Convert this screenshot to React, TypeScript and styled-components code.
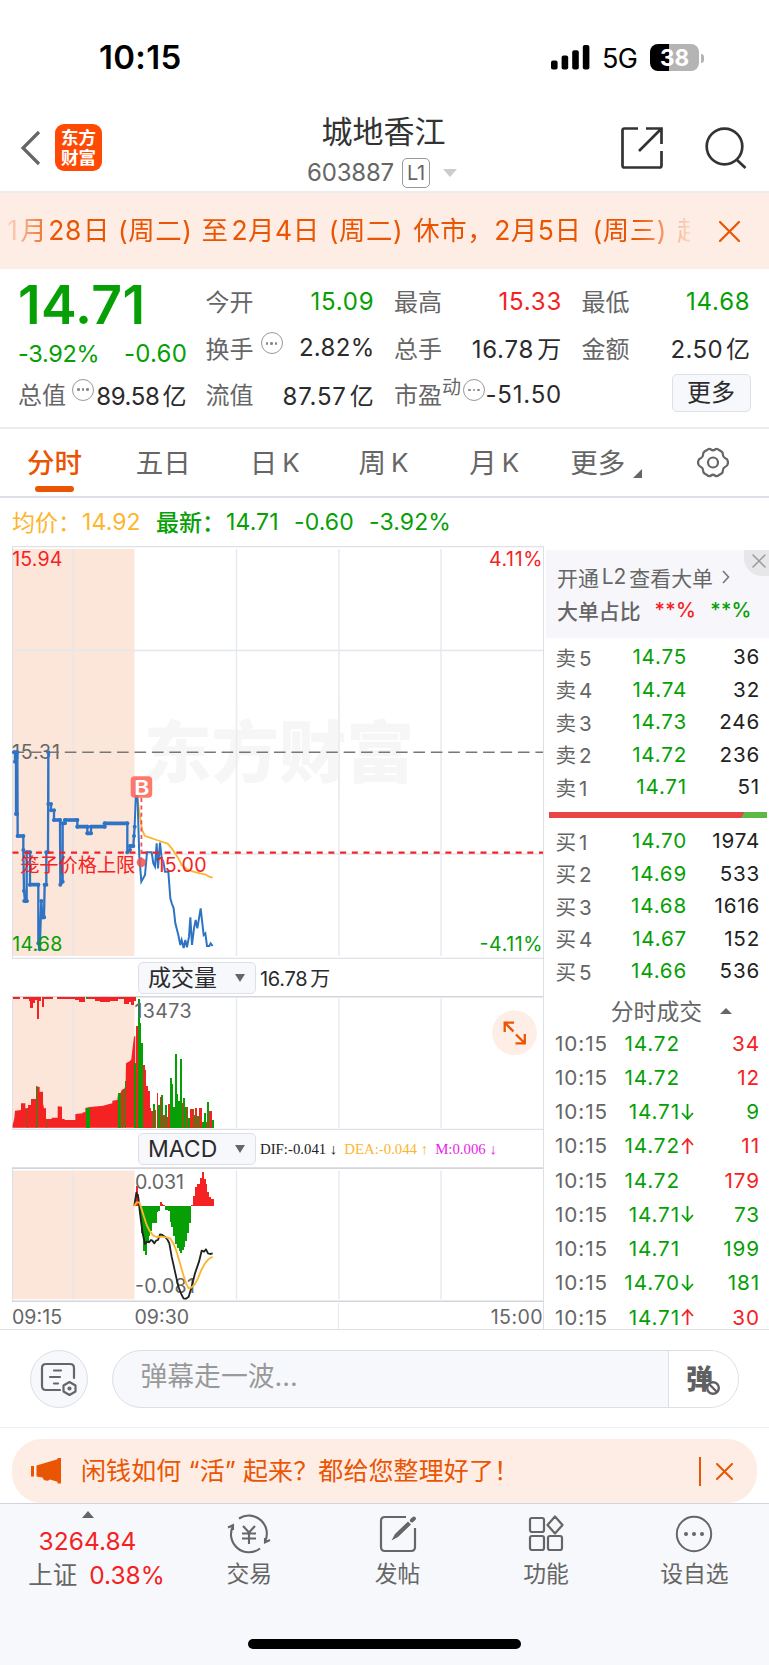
import React from 'react';
import styled, { createGlobalStyle } from 'styled-components';

const RED = '#f52224';
const GREEN = '#06a006';
const ORANGE = '#ea5504';
const GREY = '#666';
const INK = '#2b2b2d';

const Global = createGlobalStyle`
  * { box-sizing: border-box; }
  body { margin: 0; background: #fff; }
  svg { display: block; flex: none; }
`;

const Screen = styled.div`
  width: 769px;
  height: 1665px;
  overflow: hidden;
  display: flex;
  flex-direction: column;
  background: #fff;
  color: ${INK};
  font-family: Inter, 'Noto Sans CJK SC', sans-serif;
  white-space: nowrap;
`;

/* ---------- status bar ---------- */
const StatusBar = styled.div`
  height: 105px;
  padding: 10px 65px 0 99px;
  display: flex;
  align-items: center;
  color: #000;
`;
const Clock = styled.div`
  flex: 1;
  margin-top: -1px;
  font-size: 33px;
  font-weight: 600;
  letter-spacing: 0.3px;
`;
const Network = styled.div`
  margin: 2px 12px 0 12px;
  width: 36px;
  font-size: 27px;
  letter-spacing: -0.6px;
`;
const Battery = styled.div`
  width: 49px;
  height: 27px;
  margin-top: 0;
  border-radius: 8px;
  background: linear-gradient(90deg, #000 39%, #b4b4b4 39%);
  color: #fff;
  font-size: 22.5px;
  font-weight: 700;
  line-height: 27px;
  text-align: center;
`;
const BatteryTip = styled.div`
  width: 3px;
  height: 9px;
  margin: 1px 0 0 2px;
  border-radius: 0 3px 3px 0;
  background: #b4b4b4;
`;

/* ---------- header ---------- */
const Header = styled.header`
  height: 88px;
  padding: 0 22px 0 20px;
  display: flex;
  border-bottom: 2px solid #ececee;
`;
const HeaderSide = styled.div<{ $right?: boolean }>`
  width: 204px;
  display: flex;
  justify-content: ${p => (p.$right ? 'flex-end' : 'flex-start')};
  align-items: center;
  padding-bottom: 1px;
`;
const AppLogo = styled.div`
  width: 47px;
  height: 47px;
  margin-left: 14px;
  padding-top: 4px;
  border-radius: 9px;
  background: #ff4a06;
  color: #fff;
  font-size: 17.5px;
  font-weight: 700;
  line-height: 19.5px;
  text-align: center;
`;
const HeaderCenter = styled.div`
  flex: 1;
  display: flex;
  flex-direction: column;
  align-items: center;
`;
const StockName = styled.div`
  margin: 7px 0 0 0;
  height: 40px;
  line-height: 40px;
  font-size: 31px;
  color: #333;
`;
const StockCode = styled.div`
  display: flex;
  align-items: center;
  height: 31px;
  margin-top: 5px;
  margin-left: -3px;
  font-size: 24px;
  letter-spacing: -0.2px;
  color: ${GREY};
`;
const LevelTag = styled.span`
  width: 28px;
  height: 30px;
  margin: 0 13px 0 8px;
  border: 1.5px solid #999;
  border-radius: 5px;
  font-size: 20px;
  line-height: 28px;
  text-align: center;
`;

/* ---------- notice ---------- */
const Notice = styled.div`
  height: 76px;
  padding-right: 29px;
  display: flex;
  align-items: center;
  justify-content: space-between;
  background: #feede4;
`;
const NoticeText = styled.div`
  width: 690px;
  overflow: hidden;
  margin-top: -2px;
  padding-left: 7px;
  font-size: 26.4px;
  line-height: 40px;
  letter-spacing: 0.6px;
  color: ${ORANGE};
  mask-image: linear-gradient(90deg, transparent 0, #000 55px, #000 635px, transparent 698px);
`;
const NoticePart = styled.span<{ $gap?: number }>`
  margin-left: ${p => p.$gap ?? 0}px;
`;

/* ---------- quote ---------- */
const Quote = styled.section`
  height: 160px;
  padding: 9px 18.5px 0 18px;
  display: flex;
  justify-content: space-between;
  border-bottom: 2px solid #ebecef;
`;
const QuoteColumn = styled.div<{ $w: number }>`
  width: ${p => p.$w}px;
  display: flex;
  flex-direction: column;
`;
const LastPrice = styled.div`
  height: 53px;
  line-height: 53px;
  font-size: 53.5px;
  font-weight: 600;
  letter-spacing: 0.3px;
  color: ${GREEN};
`;
const Changes = styled.div`
  height: 40px;
  padding-top: 5px;
  display: flex;
  justify-content: space-between;
  align-items: center;
  font-size: 23.5px;
  letter-spacing: -0.3px;
  color: ${GREEN};
`;
const ChangeAmount = styled.span`
  margin-right: -1px;
  font-size: 24px;
  letter-spacing: 0.2px;
`;
const QuoteCell = styled.div`
  height: 46.6px;
  display: flex;
  align-items: center;
  font-size: 24px;
`;
const CellLabel = styled.span`
  margin-top: -1px;
  color: ${GREY};
`;
const CellSup = styled.sup`
  font-size: 19px;
  line-height: 20px;
  margin-bottom: 12px;
  color: ${GREY};
`;
const CellValue = styled.span<{ $c?: string; $track?: number }>`
  margin-left: auto;
  letter-spacing: ${p => p.$track ?? 0.8}px;
  color: ${p => p.$c ?? INK};
`;
const Unit = styled.span`
  margin-left: 3px;
`;
const InfoDots = styled.span<{ $ml?: number }>`
  width: 22px;
  height: 22px;
  margin: 0 0 9px ${p => p.$ml ?? 6}px;
  border: 1.5px solid #999;
  border-radius: 50%;
  display: flex;
  flex: none;
  align-items: center;
  justify-content: center;
  gap: 2px;
  i { width: 2.6px; height: 2.6px; border-radius: 50%; background: #888; }
`;
const MoreButton = styled.button`
  width: 79px;
  height: 38px;
  margin: -2px 0 0 auto;
  padding: 0;
  border: 1.5px solid #dde0e6;
  border-radius: 5px;
  background: #f7f8fb;
  color: ${INK};
  font: inherit;
  font-size: 24px;
  line-height: 34px;
`;

/* ---------- tabs ---------- */
const Tabs = styled.nav`
  height: 69px;
  display: flex;
  padding: 0 40px 0 27px;
  border-bottom: 2px solid #dde0e8;
`;
const Tab = styled.div<{ $active?: boolean; $w: number }>`
  width: ${p => p.$w}px;
  height: 67px;
  display: flex;
  font-size: 27.5px;
  line-height: 68px;
  color: ${p => (p.$active ? ORANGE : GREY)};
  font-weight: ${p => (p.$active ? 500 : 400)};
  position: relative;
  ${p => p.$active && `&::after {
    content: ''; position: absolute; left: 8px; bottom: 4px; width: 39px; height: 6px;
    border-radius: 3px; background: ${ORANGE};
  }`}
`;
const PeriodLetter = styled.span`
  margin-left: 5px;
  font-size: 26px;
`;
const TabCorner = styled.i`
  margin: 40px 0 0 8px;
  width: 0;
  height: 0;
  border-left: 9px solid transparent;
  border-bottom: 9px solid ${GREY};
`;
const GearSlot = styled.div`
  padding-top: 18px;
`;

/* ---------- averages ---------- */
const Averages = styled.div`
  height: 48px;
  padding: 0 0 1px 12px;
  display: flex;
  align-items: center;
  font-size: 23px;
  color: ${GREEN};
`;
const AverageLabel = styled.span<{ $c?: string }>`
  width: 70px;
  margin-top: -2px;
  color: ${p => p.$c};
`;
const AverageValue = styled.span<{ $c?: string; $w: number }>`
  width: ${p => p.$w}px;
  letter-spacing: 0.1px;
  color: ${p => p.$c};
`;

/* ---------- market body ---------- */
const Market = styled.main`
  height: 784px;
  display: flex;
  overflow: hidden;
  border-bottom: 1.5px solid #dfe1e8;
`;
const Charts = styled.div`
  width: 544px;
  border-right: 1.5px solid #dcdfe6;
`;
const IndicatorRow = styled.div<{ $h: number }>`
  height: ${p => p.$h}px;
  padding-left: 138px;
  display: flex;
  align-items: center;
`;
const IndicatorSelect = styled.div`
  width: 118px;
  height: 32px;
  margin-right: 4px;
  padding: 0 10px 0 9px;
  display: flex;
  align-items: center;
  justify-content: space-between;
  border: 1.5px solid #dde0e6;
  border-radius: 5px;
  background: #f7f8fb;
  font-size: 23px;
  line-height: 28px;
`;
const DownMark = styled.i`
  border: 5px solid transparent;
  border-top: 8px solid ${GREY};
  border-bottom: 0;
`;
const VolumeTotal = styled.span`
  font-size: 20px;
  letter-spacing: -0.3px;
`;
const MacdValue = styled.span<{ $c: string }>`
  margin-right: 7px;
  font: 14.8px/20px 'Liberation Serif', 'DejaVu Sans', serif;
  color: ${p => p.$c};
`;
const TimeAxis = styled.div`
  height: 27px;
  display: flex;
  padding: 1px 0 0 12px;
  font-size: 19.6px;
  line-height: 28px;
  color: ${GREY};
`;
const TimeMark = styled.span<{ $w?: number }>`
  width: ${p => (p.$w ? p.$w + 'px' : 'auto')};
`;
const TimeEnd = styled.span`
  flex: 1;
  margin-left: 80px;
  border-left: 1px solid #e6e8ee;
  text-align: right;
  letter-spacing: 0.4px;
`;

/* ---------- order book ---------- */
const Book = styled.aside`
  flex: 1;
  display: flex;
  flex-direction: column;
  padding-top: 4px;
`;
const BigOrders = styled.div`
  position: relative;
  flex: none;
  height: 88px;
  margin-left: 1.5px;
  padding: 10px 0 0 11.5px;
  background: #f7f7fb;
  color: ${GREY};
  font-size: 20.9px;
`;
const BigOrdersLink = styled.div`
  display: flex;
  align-items: center;
  height: 33px;
`;
const BigOrdersRatio = styled.div`
  display: flex;
  align-items: center;
  height: 33px;
  font-weight: 500;
`;
const Ratio = styled.span<{ $c: string }>`
  margin-left: 14px;
  font-size: 20px;
  letter-spacing: 0.3px;
  color: ${p => p.$c};
`;
const CloseCorner = styled.div`
  position: absolute;
  right: 0;
  top: 0;
  width: 25px;
  height: 26px;
  padding: 4px 0 0 8px;
  border-bottom-left-radius: 18px;
  background: #e7e7ea;
`;
const Levels = styled.div<{ $top: number }>`
  padding: ${p => p.$top}px 9px 0 11.5px;
`;
const LevelRow = styled.div`
  height: 32.5px;
  display: flex;
  align-items: center;
  font-size: 20.6px;
  letter-spacing: 0.8px;
`;
const LevelName = styled.span`
  width: 48px;
  letter-spacing: 0;
  color: ${GREY};
`;
const LevelDigit = styled.span`
  margin-left: 3px;
`;
const LevelPrice = styled.span`
  width: 83.5px;
  text-align: right;
  color: ${GREEN};
`;
const LevelQty = styled.span`
  flex: 1;
  text-align: right;
  color: #222;
`;
const Pressure = styled.div`
  flex: none;
  height: 6px;
  margin: 8.5px 2px 0 4.5px;
  background: linear-gradient(118deg, #e84545 88.2%, #5cb946 88.5%);
`;
const TradesTitle = styled.div`
  flex: none;
  height: 39px;
  padding: 8px 37px 0 0;
  display: flex;
  align-items: center;
  justify-content: flex-end;
  gap: 18px;
  font-size: 22.8px;
  color: ${GREY};
`;
const UpMark = styled.i<{ $h: number }>`
  border: 6px solid transparent;
  border-bottom: ${p => p.$h}px solid ${GREY};
  border-top: 0;
`;
const TradeRow = styled.div`
  flex: none;
  height: 34.28px;
  padding: 0 9px 0 11px;
  display: flex;
  align-items: center;
  font-size: 20.7px;
  letter-spacing: 0.9px;
`;
const TradeTime = styled.span`
  width: 56px;
  color: ${GREY};
`;
const TradePrice = styled.span`
  width: 69px;
  text-align: right;
  color: ${GREEN};
`;
const TradeArrow = styled.span`
  width: 17px;
`;
const TradeQty = styled.span<{ $c: string }>`
  flex: 1;
  text-align: right;
  color: ${p => p.$c};
`;

/* ---------- comment bar ---------- */
const CommentBar = styled.div`
  height: 98px;
  padding: 0 30px;
  display: flex;
  align-items: center;
  gap: 23.5px;
  border-bottom: 1.5px solid #f0f1f4;
`;
const RoundButton = styled.div`
  width: 58px;
  height: 58px;
  display: flex;
  align-items: center;
  justify-content: center;
  border: 1.5px solid #dcdfe6;
  border-radius: 50%;
  background: #f7f8fb;
`;
const CommentPill = styled.div`
  flex: 1;
  height: 58px;
  display: flex;
  overflow: hidden;
  border: 1.5px solid #dcdfe6;
  border-radius: 29px;
  background: #f7f8fb;
`;
const CommentHint = styled.div`
  flex: 1;
  padding-left: 28px;
  font-size: 26.8px;
  line-height: 50px;
  color: #999;
`;
const DanmuToggle = styled.div`
  width: 70px;
  display: flex;
  align-items: center;
  padding: 0 0 3px 17px;
  border-left: 1.5px solid #dcdfe6;
  background: #fff;
  color: #606060;
  font-size: 27px;
  font-weight: 800;
`;

/* ---------- promo ---------- */
const PromoWrap = styled.div`
  height: 75px;
  padding: 11px 12px 0;
`;
const Promo = styled.div`
  height: 64px;
  padding: 0 24.5px 0 19px;
  display: flex;
  align-items: center;
  border-radius: 30px;
  background: #feede4;
  color: ${ORANGE};
  font-size: 25px;
`;
const PromoText = styled.div`
  flex: 1;
  margin: 0 0 0 20px;
  line-height: 40px;
  letter-spacing: 0.1px;
`;
const PromoDivider = styled.i`
  width: 1.8px;
  height: 29px;
  margin-right: 15px;
  background: ${ORANGE};
`;

/* ---------- bottom nav ---------- */
const BottomBar = styled.footer`
  flex: 1;
  display: flex;
  flex-direction: column;
  border-top: 1.5px solid #cfd5de;
  background: #f7f8fb;
`;
const NavRow = styled.div`
  height: 135px;
  display: flex;
`;
const IndexBox = styled.div`
  width: 175px;
  padding-top: 7px;
  display: flex;
  flex-direction: column;
  align-items: center;
  color: ${RED};
  font-size: 24.5px;
  letter-spacing: 0;
`;
const IndexValue = styled.div`
  margin: 5px 0 0 0;
  height: 36px;
  line-height: 36px;
`;
const IndexLine = styled.div`
  height: 34px;
  line-height: 34px;
  margin: -1px 0 0 18px;
`;
const IndexName = styled.span`
  color: ${GREY};
  margin-right: 12px;
`;
const NavItem = styled.div`
  width: 148.4px;
  padding-top: 10px;
  display: flex;
  flex-direction: column;
  align-items: center;
  font-size: 22.8px;
  line-height: 36px;
  color: ${GREY};
  svg { margin-bottom: 1.5px; overflow: visible; }
`;
const HomeIndicator = styled.div`
  width: 273px;
  height: 10px;
  margin: 0 auto;
  border-radius: 5px;
  background: #000;
`;

/* ---------- icons ---------- */
const Cross = ({ s, c, w = 2 }: { s: number; c: string; w?: number }) => (
  <svg width={s} height={s} viewBox={`0 0 ${s} ${s}`} stroke={c} strokeWidth={w} strokeLinecap="round">
    <path d={`M1 1L${s - 1} ${s - 1}M${s - 1} 1L1 ${s - 1}`} />
  </svg>
);
const Dots = ({ ml }: { ml?: number }) => (
  <InfoDots $ml={ml}><i /><i /><i /></InfoDots>
);

/* ---------- chart data, in thirds of a pixel ---------- */
const AUCTION = '42,637 45,637 45,665 48,665 48,822 51,822 51,637 52,637 53,888 70,888 70,930 72,1053 75,1083 80,1083 80,937 90,937 90,1034 115,1034 115,1210 119,1228 124,1083 127,1132 132,1132 134,1034 139,1034 139,937 144,937 145,637 145,792 153,792 153,811 162,811 162,840 180,840 181,1034 188,1025 188,850 195,850 195,840 232,840 232,860 262,860 262,880 273,880 273,860 314,860 314,850 382,850 382,937 390,930 390,918 400,918 402,888 404,860';
const FLATS = 'M53 888H70M90 1034H115M162 840H180M195 840H232M232 860H262M262 880H273M273 860H314M314 850H382M390 918H400M72 1083H81M80 937H90M125 1132H133';
const SESSION = '404,860 409,718 413,790 418,950 424,1025 435,1005 441,937 455,937 460,970 465,980 470,910 474,985 480,908 485,955 490,965 495,995 505,995 511,1075 516,1092 521,1105 526,1150 535,1185 541,1215 545,1200 551,1224 556,1200 561,1222 567,1190 571,1132 576,1215 582,1165 587,1140 592,1165 602,1105 611,1185 616,1180 621,1218 628,1218 632,1210 638,1218';
const AVERAGE = '412,770 416,800 420,830 426,870 435,888 450,893 470,900 503,911 515,925 525,940 535,955 545,975 560,987 580,995 600,1000 618,1004 628,1010 638,1013';
const AUCTION_VOLUME = '38,533 38,525 43,505 45,482 63,480 63,460 76,460 76,475 84,475 84,465 93,465 93,447 108,447 108,409 119,411 119,425 129,425 129,460 132,475 138,475 138,507 155,507 155,503 173,503 173,469 186,470 186,507 194,507 194,510 226,510 226,492 248,490 248,487 256,487 256,474 270,471 310,467 325,463 337,460 337,452 352,450 354,432 362,428 365,420 374,415 377,395 378,340 390,333 394,328 397,300 402,260 406,258 406,533';
type Bar = [string, number, number, number];
const VOLUME: Bar[] = [
  ['g', 108, 111, 409], ['d', 82, 84, 475], ['d', 93, 94, 465], ['d', 138, 140, 507], ['g', 257, 270, 473], ['g', 354, 363, 430], ['d', 366, 368, 420], ['g', 376, 378, 392],
  ['g', 403, 408, 340], ['r', 408, 413, 228], ['g', 413, 419, 147], ['g', 419, 424, 218], ['g', 424, 429, 280], ['r', 429, 434, 345],
  ['r', 434, 438, 360], ['r', 438, 443, 408], ['r', 443, 449, 423], ['r', 449, 454, 473], ['r', 454, 459, 482], ['g', 459, 464, 462],
  ['r', 464, 469, 480], ['r', 470, 474, 430], ['g', 474, 479, 465], ['r', 479, 484, 442], ['g', 484, 489, 435], ['r', 489, 494, 495],
  ['g', 495, 500, 465], ['r', 500, 505, 500], ['r', 505, 509, 462], ['g', 510, 515, 384], ['g', 515, 520, 402], ['g', 520, 525, 470],
  ['g', 525, 530, 311], ['g', 530, 535, 432], ['g', 535, 541, 452], ['g', 541, 546, 326], ['r', 546, 550, 458], ['g', 550, 556, 445],
  ['g', 556, 560, 470], ['r', 560, 565, 470], ['g', 565, 570, 505], ['r', 570, 582, 478], ['d', 576, 578, 478], ['g', 582, 586, 495],
  ['r', 586, 591, 473], ['g', 591, 597, 498], ['r', 597, 606, 474], ['g', 607, 612, 515], ['g', 612, 617, 490], ['r', 617, 621, 515],
  ['g', 622, 627, 455], ['r', 628, 637, 483], ['g', 637, 643, 510],
];
const UNMATCHED: Bar[] = [
  ['r', 38, 60, 146], ['r', 70, 86, 147], ['r', 86, 90, 152], ['r', 90, 98, 173], ['r', 98, 104, 158], ['r', 104, 110, 150], ['r', 110, 117, 206], ['r', 117, 124, 152],
  ['r', 125, 131, 170], ['r', 131, 160, 146], ['r', 172, 225, 147], ['r', 225, 238, 150], ['r', 238, 256, 156], ['g', 257, 264, 146],
  ['r', 264, 285, 147], ['r', 285, 300, 153], ['r', 300, 330, 157], ['r', 330, 355, 152], ['r', 355, 372, 146], ['r', 372, 388, 162], ['r', 388, 394, 157], ['r', 394, 403, 165], ['r', 403, 407, 154],
];
const MACD: Bar[] = [
  ['r', 405, 409, 735], ['r', 409, 413, 708], ['r', 413, 418, 732], ['g', 418, 424, 790], ['g', 424, 429, 850], ['g', 429, 434, 902], ['g', 434, 440, 916], ['g', 440, 446, 880],
  ['g', 446, 451, 858], ['g', 451, 456, 842], ['g', 456, 470, 818], ['g', 470, 475, 787], ['g', 475, 480, 782], ['r', 480, 485, 756],
  ['r', 485, 490, 763], ['r', 490, 496, 766], ['g', 495, 503, 781], ['g', 503, 510, 784], ['g', 510, 514, 815], ['g', 514, 520, 832],
  ['g', 520, 525, 858], ['g', 525, 530, 882], ['g', 530, 536, 895], ['g', 536, 541, 903], ['g', 541, 546, 909], ['g', 546, 551, 900],
  ['g', 551, 556, 890], ['g', 556, 561, 873], ['g', 561, 566, 848], ['g', 566, 572, 820], ['r', 572, 580, 764], ['r', 580, 586, 738],
  ['r', 586, 592, 710], ['r', 592, 599, 702], ['r', 599, 605, 683], ['r', 605, 612, 667], ['r', 612, 617, 686], ['r', 617, 622, 702],
  ['r', 622, 627, 727], ['r', 627, 633, 740], ['r', 633, 643, 748],
];
const DIF = '403,768 409,728 415,742 420,790 428,850 435,882 441,875 447,877 453,870 457,872 463,880 468,872 474,870 480,853 487,855 495,860 503,870 508,880 515,920 525,965 535,1010 545,1035 551,1046 558,1046 566,1040 575,1010 585,970 597,935 605,902 612,905 618,898 624,910 630,912 638,910';
const DEA = '403,768 410,757 418,757 424,775 432,800 440,825 450,845 460,857 470,861 485,860 500,862 510,865 520,880 530,905 540,940 550,975 558,1000 566,1015 574,1013 584,1003 594,985 604,960 615,940 625,928 638,920';
const TONE: Record<string, string> = { r: '#f52224', g: '#06a006', d: '#8a5a12' };
const Bars = ({ data, base }: { data: Bar[]; base: number }) => (
  <g shapeRendering="crispEdges">
    {data.map(([t, a, b, y], i) => (
      <rect key={i} x={a} width={b - a} y={Math.min(y, base)} height={Math.abs(base - y)} fill={TONE[t]} />
    ))}
  </g>
);
const Grid = ({ top, bottom }: { top: number; bottom: number }) => (
  <g>
    <rect x={12.5} y={top} width={122} height={bottom - top} fill="#fce6da" />
    <path d={[73, 236.5, 339, 441].map(x => `M${x} ${top}V${bottom}`).join('')} stroke="#e4e7ee" strokeWidth={1.3} />
    <path d={`M12.5 ${top - 3}V${bottom + 2}`} stroke="#dcdfe6" />
  </g>
);
const chartFont = 'Inter, "Noto Sans CJK SC", sans-serif';

const PriceChart = () => (
  <svg width="543" height="413" viewBox="0 546 543 413" fontFamily={chartFont} fontSize="19.6">
    <Grid top={549} bottom={956} />
    <path d="M12 546.5H543M12 958.3H543" stroke="#dfe1e7" strokeWidth={1.3} />
    <path d="M12 650.5H543M12 854H543" stroke="#e4e7ee" strokeWidth={1.4} />
    <text x="144" y="777" fontSize="67.5" fontWeight="900" fill="#f6f6f7">东方财富</text>
    <path d="M236.5 700V800M339 700V800" stroke="#e9ebf1" strokeWidth={1.3} />
    <text x="12" y="758.5" fill={GREY} textLength="48">15.31</text>
    <path d="M12.5 752.3H543" stroke="#777" strokeWidth={1.4} strokeDasharray="11.6 5.83" />
    <g transform="translate(0 540) scale(.33333)" fill="none" strokeLinejoin="round">
      <polyline points={AVERAGE} stroke="#fdb52e" strokeWidth={5.5} />
      <polyline points={AUCTION} stroke="#2f74c4" strokeWidth={7} />
      <path d={FLATS} stroke="#2f74c4" strokeWidth={11} strokeLinecap="round" />
      <polyline points={SESSION} stroke="#2f74c4" strokeWidth={6} strokeLinejoin="miter" />
      {AUCTION.split(' ').map((p, i) => {
        const [x, y] = p.split(',');
        return <circle key={i} cx={x} cy={y} r={6} fill="#2f74c4" />;
      })}
    </g>
    <path d="M12.5 852.6H543" stroke="#f52224" strokeWidth={2.4} strokeDasharray="6 5.7" />
    <path d="M141.4 798V860" stroke="#f2524e" strokeWidth={1.8} strokeDasharray="4 3.4" />
    <circle cx="141.3" cy="862.6" r="4.6" fill="#f2524e" opacity=".85" />
    <rect x="130.7" y="776.3" width="21.5" height="21.4" rx="4" fill="#ff6558" opacity=".88" />
    <text x="134" y="794.6" fontSize="20.5" fontWeight="600" fill="#fff" textLength="15.5" lengthAdjust="spacingAndGlyphs">B</text>
    <g fill={RED}>
      <text x="12.3" y="565.7" textLength="50">15.94</text>
      <text x="489" y="565.7" textLength="53.5">4.11%</text>
      <text x="20.2" y="872" fontSize="19.2">笼子价格上限</text>
      <text x="156.5" y="871.5" textLength="50">15.00</text>
    </g>
    <g fill={GREEN}>
      <text x="12.3" y="951" textLength="50">14.68</text>
      <text x="479.5" y="951" textLength="63">-4.11%</text>
    </g>
  </svg>
);

const VolumeChart = () => (
  <svg width="543" height="134" viewBox="0 996 543 134" fontFamily={chartFont} fontSize="19.6">
    <Grid top={998.5} bottom={1128} />
    <path d="M12 996.8H543" stroke="#d2d5dc" strokeWidth={1.6} />
    <path d="M12 1129.3H543" stroke="#dfe1e7" strokeWidth={1.3} />
    <g transform="translate(0 950) scale(.33333)">
      <polygon points={AUCTION_VOLUME} fill="#f52224" />
      <Bars data={VOLUME} base={533} />
      <Bars data={UNMATCHED} base={142} />
    </g>
    <text x="134.5" y="1018" fill={GREY} textLength="57">13473</text>
    <circle cx="514.5" cy="1032.7" r="22.4" fill="#feeee6" />
    <g stroke={ORANGE} strokeWidth="2.3" fill="none">
      <path d="M514 1022.7H504.7V1032M505 1023L513.5 1031.5M515.5 1043.3H524.8V1034M524.5 1043L516 1034.5" />
    </g>
  </svg>
);

const MacdChart = () => (
  <svg width="543" height="135" viewBox="0 1167 543 135" fontFamily={chartFont} fontSize="19.6">
    <Grid top={1170.5} bottom={1299.3} />
    <path d="M12 1168.2H543M12 1301.4H543" stroke="#d2d5dc" strokeWidth={1.7} />
    <g transform="translate(0 950) scale(.33333)" fill="none" strokeLinejoin="round">
      <Bars data={MACD} base={769} />
    </g>
    <g fill={GREY}>
      <text x="135" y="1189" textLength="49">0.031</text>
      <text x="135" y="1293" textLength="60">-0.081</text>
    </g>
    <g transform="translate(0 950) scale(.33333)" fill="none" strokeLinejoin="round">
      <polyline points={DIF} stroke="#222" strokeWidth={5.5} />
      <polyline points={DEA} stroke="#fdb52e" strokeWidth={5.5} />
    </g>
  </svg>
);

const SELL = [['5', '14.75', '36'], ['4', '14.74', '32'], ['3', '14.73', '246'], ['2', '14.72', '236'], ['1', '14.71', '51']];
const BUY = [['1', '14.70', '1974'], ['2', '14.69', '533'], ['3', '14.68', '1616'], ['4', '14.67', '152'], ['5', '14.66', '536']];
const TRADES: [string, string, string, string][] = [
  ['14.72', '', '34', RED], ['14.72', '', '12', RED], ['14.71', '↓', '9', GREEN], ['14.72', '↑', '11', RED], ['14.72', '', '179', RED],
  ['14.71', '↓', '73', GREEN], ['14.71', '', '199', GREEN], ['14.70', '↓', '181', GREEN], ['14.71', '↑', '30', RED],
];

const LevelList = ({ side, rows, top }: { side: string; rows: string[][]; top: number }) => (
  <Levels $top={top}>
    {rows.map(([n, price, qty]) => (
      <LevelRow key={n}>
        <LevelName>{side}<LevelDigit>{n}</LevelDigit></LevelName>
        <LevelPrice>{price}</LevelPrice>
        <LevelQty>{qty}</LevelQty>
      </LevelRow>
    ))}
  </Levels>
);

const TickArrow = ({ up }: { up: boolean }) => (
  <svg width="15" height="18" viewBox="0 0 15 18" fill="none" stroke={up ? RED : GREEN} strokeWidth="1.8">
    <path d={up ? 'M7.5 17V2M2 8L7.5 2L13 8' : 'M7.5 1V16M2 10L7.5 16L13 10'} />
  </svg>
);

export default function App() {
  return (
    <Screen>
      <Global />
      <StatusBar>
        <Clock>10:15</Clock>
        <svg width="39" height="25" viewBox="0 0 39 25">
          <rect x="0" y="15.5" width="6.6" height="9" rx="2" />
          <rect x="10.6" y="10.5" width="6.6" height="14" rx="2" />
          <rect x="21.2" y="5.3" width="6.6" height="19.2" rx="2" />
          <rect x="31.8" y="0" width="6.6" height="24.5" rx="2" />
        </svg>
        <Network>5G</Network>
        <Battery>38</Battery>
        <BatteryTip />
      </StatusBar>

      <Header>
        <HeaderSide>
          <svg width="21" height="36" viewBox="0 0 21 36" fill="none" stroke="#666" strokeWidth="3.2">
            <path d="M19 2L3 18L19 34" />
          </svg>
          <AppLogo>东方<br />财富</AppLogo>
        </HeaderSide>
        <HeaderCenter>
          <StockName>城地香江</StockName>
          <StockCode>
            603887
            <LevelTag>L1</LevelTag>
            <svg width="14" height="8"><path d="M0 0H14L7 8Z" fill="#ccc" /></svg>
          </StockCode>
        </HeaderCenter>
        <HeaderSide $right>
          <svg width="42" height="42" viewBox="0 0 42 42" fill="none" stroke="#333" strokeWidth="2.7">
            <path d="M17 1.5H3.5Q1.5 1.5 1.5 3.5V38.5Q1.5 40.5 3.5 40.5H38.5Q40.5 40.5 40.5 38.5V24" />
            <path d="M25 1.5H40.5V17M40 2L18 24" />
          </svg>
          <svg style={{ marginLeft: 42 }} width="42" height="42" viewBox="0 0 42 42" fill="none" stroke="#333" strokeWidth="2.7">
            <circle cx="19.5" cy="19.5" r="17.8" />
            <path d="M31.5 32.5L40.5 41" />
          </svg>
        </HeaderSide>
      </Header>

      <Notice>
        <NoticeText>
          1<NoticePart $gap={2}>月</NoticePart><NoticePart $gap={1}>28</NoticePart><NoticePart $gap={1}>日</NoticePart>
          <NoticePart $gap={8}>(周二)</NoticePart><NoticePart $gap={9}>至</NoticePart><NoticePart $gap={3}>2月4日</NoticePart>
          <NoticePart $gap={9}>(周二)</NoticePart><NoticePart $gap={10}>休市，2月5日</NoticePart>
          <NoticePart $gap={11}>(周三)</NoticePart><NoticePart $gap={10}>起</NoticePart>
        </NoticeText>
        <Cross s={21} c={ORANGE} w={2.2} />
      </Notice>

      <Quote>
        <QuoteColumn $w={168}>
          <LastPrice>14.71</LastPrice>
          <Changes><span>-3.92%</span><ChangeAmount>-0.60</ChangeAmount></Changes>
          <QuoteCell style={{ height: 46 }}>
            <CellLabel>总值</CellLabel><Dots />
            <CellValue $track={-0.4}>89.58<Unit>亿</Unit></CellValue>
          </QuoteCell>
        </QuoteColumn>
        <QuoteColumn $w={169}>
          <QuoteCell><CellLabel>今开</CellLabel><CellValue $c={GREEN}>15.09</CellValue></QuoteCell>
          <QuoteCell><CellLabel>换手</CellLabel><Dots ml={7} /><CellValue $track={0.3}>2.82%</CellValue></QuoteCell>
          <QuoteCell><CellLabel>流值</CellLabel><CellValue>87.57<Unit>亿</Unit></CellValue></QuoteCell>
        </QuoteColumn>
        <QuoteColumn $w={168}>
          <QuoteCell><CellLabel>最高</CellLabel><CellValue $c={RED}>15.33</CellValue></QuoteCell>
          <QuoteCell><CellLabel>总手</CellLabel><CellValue>16.78<Unit>万</Unit></CellValue></QuoteCell>
          <QuoteCell><CellLabel>市盈</CellLabel><CellSup>动</CellSup><Dots ml={2} /><CellValue>-51.50</CellValue></QuoteCell>
        </QuoteColumn>
        <QuoteColumn $w={169}>
          <QuoteCell><CellLabel>最低</CellLabel><CellValue $c={GREEN}>14.68</CellValue></QuoteCell>
          <QuoteCell><CellLabel>金额</CellLabel><CellValue $track={0.4}>2.50<Unit>亿</Unit></CellValue></QuoteCell>
          <QuoteCell><MoreButton>更多</MoreButton></QuoteCell>
        </QuoteColumn>
      </Quote>

      <Tabs>
        <Tab $active $w={109}>分时</Tab>
        <Tab $w={114}>五日</Tab>
        <Tab $w={109}>日<PeriodLetter>K</PeriodLetter></Tab>
        <Tab $w={111}>周<PeriodLetter>K</PeriodLetter></Tab>
        <Tab $w={101}>月<PeriodLetter>K</PeriodLetter></Tab>
        <Tab $w={127}>更多<TabCorner /></Tab>
        <GearSlot>
          <svg width="32" height="31" viewBox="0 0 32 31" fill="none" stroke="#666" strokeWidth="2.2" strokeLinejoin="round">
            <path d="M10 3Q12 1 14 2.5Q16 4 18 2.5Q20 1 22 3L24.5 4.5Q26 5.5 26 8Q26 10 28 11Q31 12 31 15.5Q31 19 28 20Q26 21 26 23Q26 25.5 24.5 26.5L22 28Q20 30 18 28.5Q16 27 14 28.5Q12 30 10 28L7.5 26.5Q6 25.5 6 23Q6 21 4 20Q1 19 1 15.5Q1 12 4 11Q6 10 6 8Q6 5.5 7.5 4.5Z" />
            <circle cx="16" cy="15.5" r="5" />
          </svg>
        </GearSlot>
      </Tabs>

      <Averages>
        <AverageLabel $c="#fdb52e">均价：</AverageLabel>
        <AverageValue $c="#fdb52e" $w={74}>14.92</AverageValue>
        <AverageLabel style={{ fontWeight: 500 }}>最新：</AverageLabel>
        <AverageValue $w={68}>14.71</AverageValue>
        <AverageValue $w={75}>-0.60</AverageValue>
        <AverageValue $w={90}>-3.92%</AverageValue>
      </Averages>

      <Market>
        <Charts>
          <PriceChart />
          <IndicatorRow $h={37}>
            <IndicatorSelect>成交量<DownMark /></IndicatorSelect>
            <VolumeTotal>16.78<Unit>万</Unit></VolumeTotal>
          </IndicatorRow>
          <VolumeChart />
          <IndicatorRow $h={37}>
            <IndicatorSelect>MACD<DownMark /></IndicatorSelect>
            <MacdValue $c="#222">DIF:-0.041 ↓</MacdValue>
            <MacdValue $c="#fdb52e">DEA:-0.044 ↑</MacdValue>
            <MacdValue $c="#ea1eea">M:0.006 ↓</MacdValue>
          </IndicatorRow>
          <MacdChart />
          <TimeAxis>
            <TimeMark $w={122.5}>09:15</TimeMark>
            <TimeMark $w={123}>09:30</TimeMark>
            <TimeEnd>15:00</TimeEnd>
          </TimeAxis>
        </Charts>
        <Book>
          <BigOrders>
            <BigOrdersLink>
              开通<Unit>L2</Unit><Unit>查看大单</Unit>
              <svg style={{ marginLeft: 9 }} width="8" height="14" viewBox="0 0 8 14" fill="none" stroke="#777" strokeWidth="1.6"><path d="M1 1L6.5 7L1 13" /></svg>
            </BigOrdersLink>
            <BigOrdersRatio>大单占比<Ratio $c={RED}>**%</Ratio><Ratio $c={GREEN}>**%</Ratio></BigOrdersRatio>
            <CloseCorner><Cross s={14} c="#999" w={1.5} /></CloseCorner>
          </BigOrders>
          <LevelList side="卖" rows={SELL} top={2.5} />
          <Pressure />
          <LevelList side="买" rows={BUY} top={7} />
          <TradesTitle>分时成交<UpMark $h={6} /></TradesTitle>
          {TRADES.map(([price, arrow, qty, color], i) => (
            <TradeRow key={i}>
              <TradeTime>10:15</TradeTime>
              <TradePrice>{price}</TradePrice>
              <TradeArrow>{arrow && <TickArrow up={arrow === '↑'} />}</TradeArrow>
              <TradeQty $c={color}>{qty}</TradeQty>
            </TradeRow>
          ))}
        </Book>
      </Market>

      <CommentBar>
        <RoundButton>
          <svg width="38" height="34" viewBox="0 0 38 34" fill="none" stroke="#666" strokeWidth="2.2" strokeLinecap="round">
            <path d="M20 28H6Q2 28 2 24V6Q2 2 6 2H30Q34 2 34 6V16" />
            <path d="M14 8.5H21M10 15H20M14 21.5H18" />
            <path d="M29.5 20L35.5 23.5V29.5L29.5 33L23.5 29.5V23.5Z" strokeLinejoin="round" />
            <circle cx="29.5" cy="26.5" r="1" />
          </svg>
        </RoundButton>
        <CommentPill>
          <CommentHint>弹幕走一波...</CommentHint>
          <DanmuToggle>
            弹
            <svg style={{ margin: '22px 0 0 -8px' }} width="16" height="16" viewBox="0 0 16 16" fill="#fff" stroke="#606060" strokeWidth="2.4">
              <circle cx="8" cy="8" r="5.8" /><path d="M4 4L12 12" />
            </svg>
          </DanmuToggle>
        </CommentPill>
      </CommentBar>

      <PromoWrap>
        <Promo>
          <svg width="30" height="26" viewBox="0 0 30 26" fill={ORANGE}>
            <path d="M0 8H3V18.5H0ZM5.5 7.5L26.5 1.2V0H30V25.5H26.5V23.8L19 21.5Q17.5 23.5 13 22L11.5 19.5L5.5 18.5Z" />
          </svg>
          <PromoText>闲钱如何 “活” 起来？都给您整理好了！</PromoText>
          <PromoDivider />
          <Cross s={17} c={ORANGE} w={2} />
        </Promo>
      </PromoWrap>

      <BottomBar>
        <NavRow>
          <IndexBox>
            <UpMark $h={7} />
            <IndexValue>3264.84</IndexValue>
            <IndexLine><IndexName>上证</IndexName>0.38%</IndexLine>
          </IndexBox>
          <NavItem>
            <svg width="44" height="40" viewBox="0 0 44 40" fill="none" stroke="#666" strokeWidth="2.1">
              <path d="M12 4.500A18 18 0 0 1 38 27.500M43 26L38 28.300V24" />
              <path d="M33 34.500A18 18 0 0 1 6 12M1 13.500L6 11.200V16" />
              <path d="M16 12L22 18.500L28 12M15 19.500H29M15 24.500H29M22 18.500V30" />
            </svg>
            交易
          </NavItem>
          <NavItem>
            <svg width="38" height="40" viewBox="0 0 38 40" fill="none" stroke="#666" strokeWidth="2.2">
              <path d="M27 3H6Q2 3 2 7V33Q2 37 6 37H32Q36 37 36 33V14" />
              <path d="M12.5 26.5L16 20L29 7.5L32 10.5L19 23Z" fill="#666" stroke="none" />
              <path d="M32.8 6.5L35 4.5" strokeWidth="4" strokeLinecap="round" />
            </svg>
            发帖
          </NavItem>
          <NavItem>
            <svg width="36" height="40" viewBox="0 0 36 40" fill="none" stroke="#666" strokeWidth="2.2" strokeLinejoin="round">
              <rect x="2" y="4" width="14" height="14" rx="2" />
              <path d="M27 2.5L34.5 11L27 19.5L19.5 11Z" />
              <rect x="2" y="22" width="14" height="14" rx="2" />
              <rect x="20" y="22" width="14" height="14" rx="2" />
            </svg>
            功能
          </NavItem>
          <NavItem>
            <svg width="38" height="40" viewBox="0 0 38 40" fill="none" stroke="#666" strokeWidth="2">
              <circle cx="19" cy="20" r="17.2" />
              <g fill="#666" stroke="none"><circle cx="11" cy="20" r="2" /><circle cx="19" cy="20" r="2" /><circle cx="27" cy="20" r="2" /></g>
            </svg>
            设自选
          </NavItem>
        </NavRow>
        <HomeIndicator />
      </BottomBar>
    </Screen>
  );
}
